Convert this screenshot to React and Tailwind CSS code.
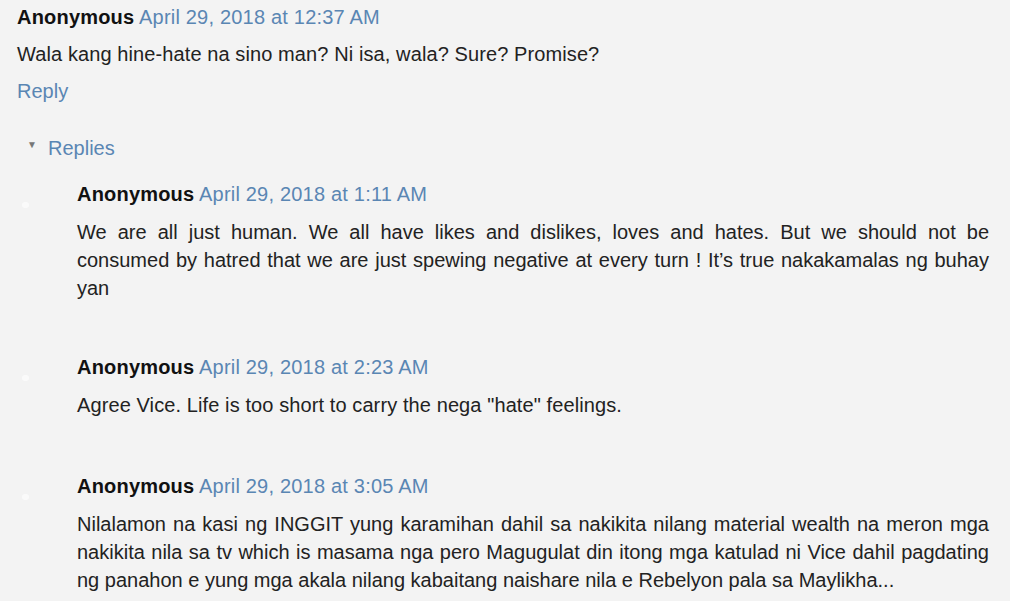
import React from 'react';

const font = { fontFamily: '"Liberation Sans", Arial, sans-serif' };

const Header = ({ date }) => (
    <div className="leading-[28px] whitespace-nowrap tracking-[0.2px]">
        <span className="font-bold text-[#111]">Anonymous</span>{' '}
        <a className="text-[#5a86b3]">{date}</a>
    </div>
);

// a line that is stretched to the full width like in the justified original
const Line = ({ children }) => (
    <span className="block text-justify [text-align-last:justify]">{children}</span>
);

const Reply = ({ date, children, className = '' }) => (
    <div className={`relative ${className}`}>
        <div className="absolute left-[-55px] top-[22px] w-[7px] h-[6px] bg-white/60 rounded-sm" />
        <Header date={date} />
        <div className="mt-[10px] leading-[28px] text-justify text-[#222]">{children}</div>
    </div>
);

const App = () => (
    <div className="w-[1010px] h-[601px] overflow-hidden bg-[#f3f3f3] text-[20px] text-[#222]" style={font}>
        <div className="pl-[17px] pr-[21px] pt-[3px]">
            <Header date="April 29, 2018 at 12:37 AM" />
            <p className="mt-[9px] leading-[28px] tracking-[0.1px]">Wala kang hine-hate na sino man? Ni isa, wala? Sure? Promise?</p>
            <div className="mt-[9px] leading-[28px] text-[#5a86b3]">Reply</div>

            <div className="mt-[29px] flex items-center leading-[28px]">
                <span className="ml-[10px] w-[21px] text-[10px] text-[#777] -mt-[6px]">▼</span>
                <span className="text-[#5a86b3]">Replies</span>
            </div>

            <div className="pl-[60px]">
                <Reply className="mt-[18px]" date="April 29, 2018 at 1:11 AM">
                    <Line>We are all just human. We all have likes and dislikes, loves and hates. But we should not be</Line>
                    <Line>consumed by hatred that we are just spewing negative at every turn ! It’s true nakakamalas ng buhay</Line>
                    <span className="block">yan</span>
                </Reply>
                <Reply className="mt-[51px]" date="April 29, 2018 at 2:23 AM">
                    <span className="tracking-[0.1px]">Agree Vice. Life is too short to carry the nega "hate" feelings.</span>
                </Reply>
                <Reply className="mt-[53px]" date="April 29, 2018 at 3:05 AM">
                    Nilalamon na kasi ng INGGIT yung karamihan dahil sa nakikita nilang material wealth na meron mga nakikita nila sa tv which is masama nga pero Magugulat din itong mga katulad ni Vice dahil pagdating ng panahon e yung mga akala nilang kabaitang naishare nila e Rebelyon pala sa Maylikha...
                </Reply>
            </div>
        </div>
    </div>
);

export default App;
